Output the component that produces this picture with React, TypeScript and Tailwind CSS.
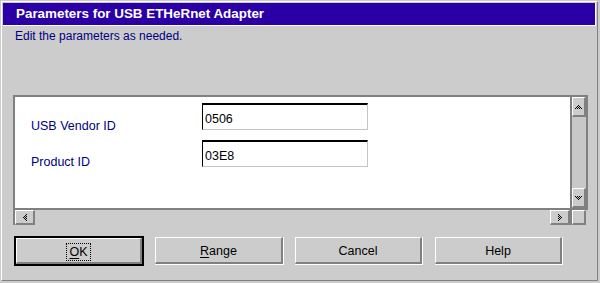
import React from "react";

function Pix({ pts, w, h }: { pts: [number, number][]; w: number; h: number }) {
  return (
    <svg width={w} height={h} viewBox={`0 0 ${w} ${h}`} shapeRendering="crispEdges">
      {pts.map(([x, y], i) => (
        <rect key={i} x={x} y={y} width={1} height={1} fill="#000" />
      ))}
    </svg>
  );
}

const up: [number, number][] = [[3,0],[2,1],[4,1],[1,2],[3,2],[5,2],[0,3],[2,3],[4,3],[6,3]];
const down: [number, number][] = up.map(([x, y]) => [x, 3 - y]);
const left: [number, number][] = up.map(([x, y]) => [y, x]);
const right: [number, number][] = up.map(([x, y]) => [3 - y, x]);

const TXT = "text-[12.5px] leading-[14px]";

function ScrollBtn({ children, className }: { children?: React.ReactNode; className: string }) {
  return (
    <div
      className={`bg-[#cccccc] border-t border-l border-white border-b-2 border-r-2 border-b-[#808080] border-r-[#808080] flex items-center justify-center ${className}`}
    >
      {children}
    </div>
  );
}

function Field({ value }: { value: string }) {
  return (
    <div className={`w-[166px] h-[27px] bg-white border-t-2 border-l border-t-black border-l-black border-b border-r border-b-[#c4c4c4] border-r-[#c4c4c4] pl-[2px] pt-[7px] text-black ${TXT}`}>
      {value}
    </div>
  );
}

function Btn({ children, def, className }: { children: React.ReactNode; def?: boolean; className: string }) {
  const inner = `h-full bg-[#cccccc] border-t border-l border-white border-b-2 border-r-2 border-b-[#808080] border-r-[#808080] flex items-center justify-center pt-[2px] text-black ${TXT}`;
  if (def) {
    return (
      <div className={`h-[30px] border-2 border-black ${className}`}>
        <div className={inner}>{children}</div>
      </div>
    );
  }
  return (
    <div className={`h-[28px] border-b border-r border-white ${className}`}>
      <div className={inner}>{children}</div>
    </div>
  );
}

export default function App() {
  return (
    <div className="w-[600px] h-[283px] bg-[#cccccc] p-px overflow-hidden font-['Liberation_Sans',Arial,sans-serif]">
      <div className="w-[597px] h-[280px] border-l border-t border-white border-r border-b border-r-[#808080] border-b-[#808080] flex flex-col">
        {/* title bar */}
        <div className="mx-px mt-px h-[23px] bg-[#2a00a6] border-b border-r border-white flex items-center pl-[13px]">
          <span className="text-white font-bold text-[13.4px] leading-[16px]">
            Parameters for USB ETHeRnet Adapter
          </span>
        </div>
        {/* subtitle */}
        <div className="mt-[3px] h-[14px] pl-[13px] text-[12px] leading-[14px] text-[#000080]">
          Edit the parameters as needed.
        </div>

        {/* panel */}
        <div className="mt-[52px] ml-[11px] w-[575px] h-[130px] border-t-2 border-l-2 border-[#808080] grid grid-cols-[555px_18px] grid-rows-[111px_17px]">
          <div className="bg-white pt-[6px] flex flex-col gap-[10px]">
            <div className="h-[27px] flex items-start">
              <div className={`w-[187px] pl-[16px] mt-[16px] text-[#000080] ${TXT}`}>USB Vendor ID</div>
              <Field value="0506" />
            </div>
            <div className="h-[27px] flex items-start">
              <div className={`w-[187px] pl-[16px] mt-[15px] text-[#000080] ${TXT}`}>Product ID</div>
              <Field value="03E8" />
            </div>
          </div>
          {/* vertical scrollbar */}
          <div className="border-l-2 border-r-2 border-[#808080] bg-[#c8c8c8] flex flex-col justify-between">
            <ScrollBtn className="h-[20px]">
              <Pix pts={up} w={7} h={4} />
            </ScrollBtn>
            <ScrollBtn className="h-[20px]">
              <Pix pts={down} w={7} h={4} />
            </ScrollBtn>
          </div>
          {/* horizontal scrollbar */}
          <div className="border-t-2 border-[#808080] bg-[#cccccc] flex justify-between">
            <ScrollBtn className="w-[20px]">
              <Pix pts={left} w={4} h={7} />
            </ScrollBtn>
            <ScrollBtn className="w-[20px]">
              <Pix pts={right} w={4} h={7} />
            </ScrollBtn>
          </div>
          <div className="border-t-2 border-l-2 border-[#808080] bg-[#cccccc] flex">
            <ScrollBtn className="w-[14px]" />
          </div>
        </div>

        {/* buttons */}
        <div className="mt-[11px] ml-[12px] flex items-center">
          <Btn def className="w-[130px]">
            <span className="border border-dotted border-black px-[2px] leading-[16px]">
              <span className="underline decoration-1 underline-offset-2">O</span>K
            </span>
          </Btn>
          <Btn className="w-[129px] ml-[11px]">
            <span>
              <span className="underline underline-offset-2">R</span>ange
            </span>
          </Btn>
          <Btn className="w-[128px] ml-[11px]">Cancel</Btn>
          <Btn className="w-[128px] ml-[12px]">Help</Btn>
        </div>
      </div>
    </div>
  );
}
